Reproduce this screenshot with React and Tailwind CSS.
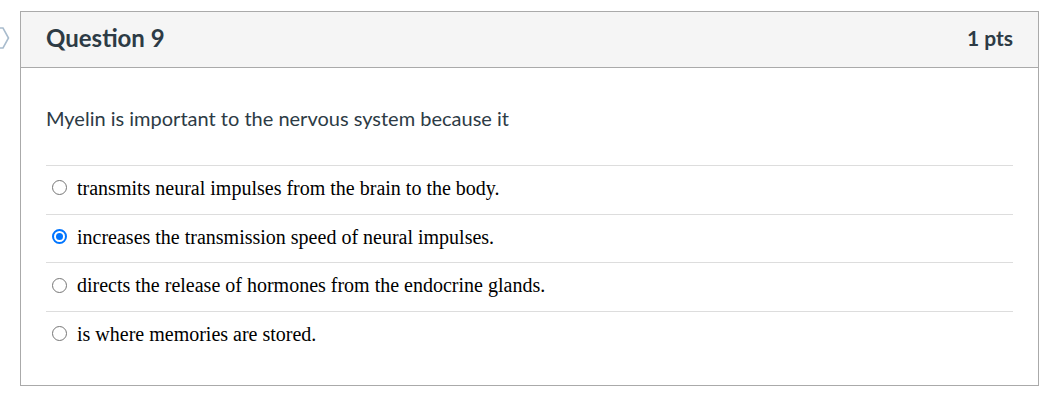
export default function App() {
  const answers = [
    { text: "transmits neural impulses from the brain to the body.", checked: false },
    { text: "increases the transmission speed of neural impulses.", checked: true },
    { text: "directs the release of hormones from the endocrine glands.", checked: false },
    { text: "is where memories are stored.", checked: false },
  ];

  return (
    <div className="w-[1057px] h-[401px] bg-white relative">
      {/* nav chevron peeking in from the left */}
      <svg className="absolute left-0 top-[27px]" width="10" height="22" viewBox="0 0 10 22">
        <path d="M-3 1 L3 1 L8.5 11 L3 21 L-3 21" fill="none" stroke="#a9bccd" strokeWidth="1.6" />
      </svg>

      <div className="pt-[11px] pl-[20px]">
        <div className="w-[1019px] h-[375px] border border-[#aaaaaa] flex flex-col">
          {/* Header */}
          <div className="h-[56px] pb-[3px] bg-[#f5f5f5] border-b border-[#aaaaaa] px-[25px] flex items-center justify-between font-['Lato',sans-serif] font-bold text-[#2d3b45]">
            <span className="text-[24px]">Question 9</span>
            <span className="text-[21px]">1 pts</span>
          </div>

          {/* Body */}
          <div className="px-[25px] pt-[36px]">
            <p className="font-['Lato',sans-serif] text-[20px] text-[#2d3b45] leading-[28px]">
              Myelin is important to the nervous system because it
            </p>

            <div className="mt-[33px]">
              {answers.map((a) => (
                <div key={a.text} className="h-[48.7px] pb-[4px] border-t border-[#dddddd] flex items-center pl-[6px]">
                  {a.checked ? (
                    <span className="w-[15px] h-[15px] rounded-full border-[2px] border-[#0075ff] flex items-center justify-center">
                      <span className="w-[7px] h-[7px] rounded-full bg-[#0075ff]" />
                    </span>
                  ) : (
                    <span className="w-[15px] h-[15px] rounded-full border border-[#767676]" />
                  )}
                  <span className="ml-[10px] font-['Liberation_Serif',serif] text-[20px] text-black">{a.text}</span>
                </div>
              ))}
            </div>
          </div>
        </div>
      </div>
    </div>
  );
}
